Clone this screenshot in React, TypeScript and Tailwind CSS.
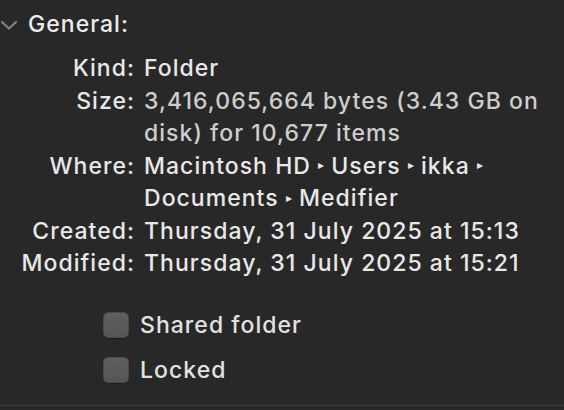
import React from 'react';

function Arrow() {
  return <span className="inline-block align-middle text-[12px] leading-none relative -top-[2px] tracking-normal">▸</span>;
}

const rows: { label: string; value: React.ReactNode; dim?: boolean }[] = [
  { label: 'Kind:', value: 'Folder' },
  {
    label: 'Size:',
    value: (
      <>
        3,416,065,664 bytes (3.43 GB on
        <br />
        disk) for 10,677 items
      </>
    ),
    dim: true,
  },
  {
    label: 'Where:',
    value: (
      <>
        Macintosh HD <Arrow /> Users <Arrow /> ikka <Arrow />
        <br />
        Documents <Arrow /> Medifier
      </>
    ),
  },
  { label: 'Created:', value: 'Thursday, 31 July 2025 at 15:13' },
  { label: 'Modified:', value: 'Thursday, 31 July 2025 at 15:21' },
];

const Checkbox: React.FC<{ label: string }> = ({ label }) => (
  <div className="flex items-center h-[45px]">
    <div className="w-[26px] h-[26px] rounded-[5px] bg-gradient-to-b from-[#5f5f5f] to-[#555555] border border-[#4a4a4a] shadow-[0_1px_1px_rgba(0,0,0,0.3)]" />
    <span className="ml-[11px] text-[#e2e2e2]">{label}</span>
  </div>
);

const App: React.FC = () => {
  return (
    <div
      className="w-[564px] h-[410px] bg-[#282828] overflow-hidden flex flex-col text-[23px] font-[450] tracking-[0.045em] antialiased"
      style={{ fontFamily: 'Inter, "Noto Sans", sans-serif' }}
    >
      <div className="flex items-center h-[48px] pt-[1px]">
        <svg width="18" height="10" viewBox="0 0 18 10">
          <polyline points="2,2 9,8.5 16,2" fill="none" stroke="#808080" strokeWidth="2.2" strokeLinecap="round" strokeLinejoin="round" />
        </svg>
        <span className="ml-[10px] text-[#ececec]">General:</span>
      </div>

      <div className="grid grid-cols-[135px_1fr] gap-x-[9px] mt-[4px] leading-[32.5px]">
        {rows.map((r) => (
          <React.Fragment key={r.label}>
            <div className="text-right text-[#e8e8e8] whitespace-nowrap">{r.label}</div>
            <div className={r.dim ? 'text-[#cdcdcd] whitespace-nowrap' : 'text-[#e8e8e8] whitespace-nowrap'}>{r.value}</div>
          </React.Fragment>
        ))}
      </div>

      <div className="mt-[23px] pl-[103px]">
        <Checkbox label="Shared folder" />
        <Checkbox label="Locked" />
      </div>

      <div className="mt-auto mb-[4px] h-[1px] bg-[#3c3c3c]" />
    </div>
  );
};

export default App;
